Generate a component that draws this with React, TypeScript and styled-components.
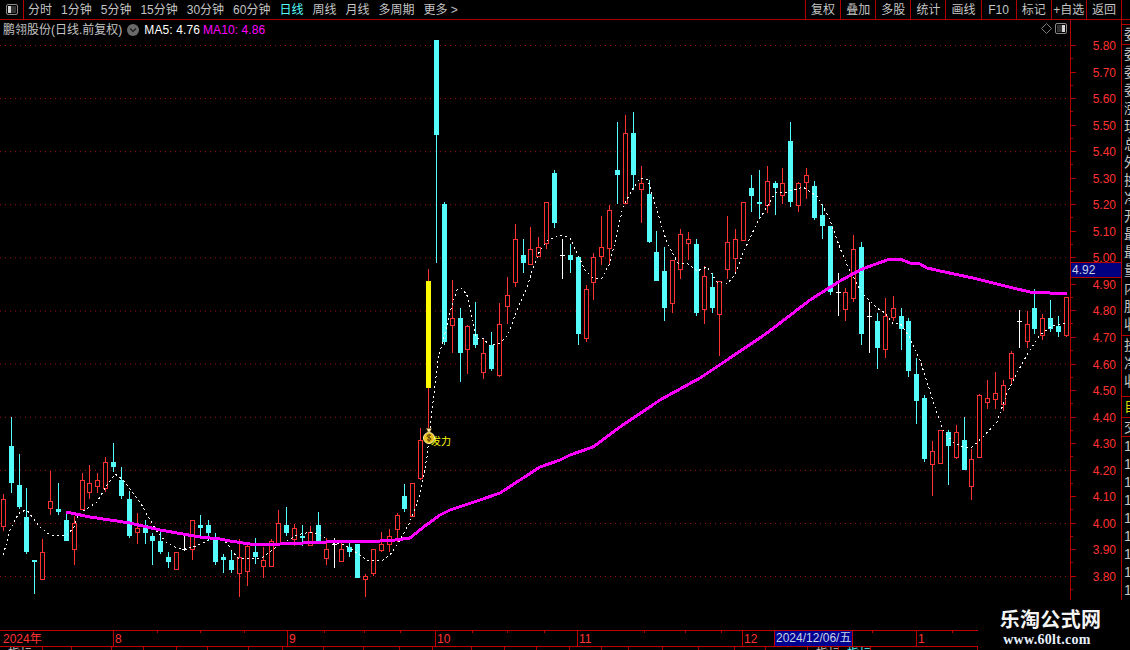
import React from "react";
import styled, { createGlobalStyle } from "styled-components";

const RED = "#ff3232";
const CYAN = "#54fcfc";
const LINE = "#b00000";
const FONT = `"Liberation Sans", "Noto Sans CJK SC", sans-serif`;

const Global = createGlobalStyle`
  html, body { margin: 0; padding: 0; background: #000; }
`;

const Page = styled.div`
  width: 1130px;
  height: 650px;
  background: #000;
  overflow: hidden;
  position: relative;
  display: flex;
  flex-direction: column;
  font-family: ${FONT};
  font-size: 12px;
  color: #c4c4c4;
`;

const Toolbar = styled.div`
  height: 19px;
  flex: none;
  display: flex;
  align-items: center;
  border-bottom: 1px solid ${LINE};
  line-height: 19px;
`;
const PanelToggle = styled.div`
  width: 23px;
  height: 19px;
  flex: none;
  display: flex;
  align-items: center;
  justify-content: center;
  border-right: 1px solid ${LINE};
  box-sizing: content-box;
`;
const PeriodList = styled.div`
  display: flex;
  gap: 9px;
  padding-left: 4px;
  padding-top: 1px;
  flex: 1;
`;
const Period = styled.span<{ $active?: boolean }>`
  white-space: pre;
  color: ${(p) => (p.$active ? "#54fcfc" : "#c4c4c4")};
`;
const ActionList = styled.div`
  display: flex;
  height: 19px;
`;
const ActionButton = styled.div`
  width: 35.11px;
  box-sizing: border-box;
  border-left: 1px solid ${LINE};
  text-align: center;
  white-space: nowrap;
  overflow: hidden;
  line-height: 20px;
`;
const ActionEnd = styled.div`
  width: 8px;
  border-left: 1px solid ${LINE};
`;

const Body = styled.div`
  flex: none;
  height: 610px;
  display: flex;
`;
const ChartPane = styled.div`
  position: relative;
  width: 1070px;
  flex: none;
`;
const ChartSvg = styled.svg`
  display: block;
  width: 1070px;
  height: 610px;
`;
const Legend = styled.div`
  position: absolute;
  left: 3px;
  top: 1px;
  height: 18px;
  display: flex;
  align-items: center;
  line-height: 18px;
  white-space: nowrap;
  color: #c4c4c4;
`;
const LegendValue = styled.span<{ $color: string; $left: number }>`
  color: ${(p) => p.$color};
  margin-left: ${(p) => p.$left}px;
  letter-spacing: 0.1px;
`;
const PaneTools = styled.div`
  position: absolute;
  right: 3px;
  top: 3px;
  display: flex;
  align-items: center;
  gap: 3px;
`;

const PriceAxis = styled.div`
  position: relative;
  width: 50px;
  flex: none;
  border-left: 1px solid ${LINE};
  padding-top: 12px;
  box-sizing: content-box;
`;
const PriceRow = styled.div`
  position: relative;
  height: 26.55px;
  line-height: 28px;
  padding-right: 5px;
  text-align: right;
  color: ${RED};
  font-size: 12px;
  &::before {
    content: "";
    position: absolute;
    left: 0;
    top: 13px;
    height: 1px;
    width: 5px;
    background: ${LINE};
  }
  &::after {
    content: "";
    position: absolute;
    left: 0;
    top: 26px;
    height: 1px;
    width: 2px;
    background: ${LINE};
  }
`;
const PriceTag = styled.div`
  position: absolute;
  left: 0;
  top: 242px;
  width: 50px;
  height: 16px;
  box-sizing: border-box;
  background: #000080;
  border-top: 1px solid ${LINE};
  border-bottom: 1px solid ${LINE};
  color: #c8d4e4;
  line-height: 15px;
  padding-left: 1px;
`;

const SideStrip = styled.div`
  flex: none;
  width: 8px;
  height: 580px;
  border-left: 1px solid ${LINE};
  overflow: hidden;
`;
const SideGroup = styled.div<{ $h: number; $color?: string; $open?: boolean }>`
  height: ${(p) => p.$h}px;
  box-sizing: border-box;
  border-bottom: ${(p) => (p.$open ? "none" : `1px solid ${LINE}`)};
  color: ${(p) => p.$color ?? "#c4c4c4"};
  overflow: hidden;
`;
const SideCell = styled.div`
  height: 18px;
  line-height: 18px;
  padding-left: 2px;
  font-size: 14px;
  white-space: nowrap;
`;

const TimeAxis = styled.div`
  position: relative;
  height: 17px;
  flex: none;
  width: 978px;
  box-sizing: border-box;
  border-top: 1px solid #c00000;
  border-bottom: 1px solid #c00000;
  display: flex;
`;
const TimeCell = styled.div<{ $w: number; $first?: boolean }>`
  width: ${(p) => p.$w}px;
  flex: none;
  box-sizing: border-box;
  border-left: ${(p) => (p.$first ? "none" : `1px solid #c00000`)};
  color: ${RED};
  padding-left: ${(p) => (p.$first ? 3 : 1)}px;
  line-height: 16px;
  white-space: nowrap;
`;
const DateCursor = styled.div`
  width: 79px;
  flex: none;
  box-sizing: border-box;
  border-left: 1px solid #c00000;
  border-right: 1px solid #c00000;
  background: #000090;
  color: #c8d4e4;
  line-height: 15px;
  padding-left: 1px;
  white-space: nowrap;
  overflow: hidden;
`;
const TimeTicks = styled.svg`
  position: absolute;
  left: 0;
  top: 0;
  width: 978px;
  height: 3px;
`;

const TabStrip = styled.div`
  width: 978px;
  height: 3px;
  flex: none;
  display: flex;
  overflow: hidden;
`;
const TabCell = styled.div<{ $w: number; $color?: string }>`
  width: ${(p) => p.$w}px;
  flex: none;
  box-sizing: border-box;
  border-right: 1px solid ${LINE};
  padding-left: 8px;
  color: ${(p) => p.$color ?? "transparent"};
  line-height: 14px;
  white-space: nowrap;
  overflow: hidden;
`;

const Watermark = styled.div`
  position: absolute;
  left: 978px;
  top: 600px;
  width: 152px;
  height: 50px;
  background: #000;
  display: flex;
  flex-direction: column;
  align-items: center;
  padding-top: 7px;
  box-sizing: border-box;
  color: #f4f4f4;
`;
const BrandName = styled.div`
  font-family: "Noto Sans CJK SC", sans-serif;
  font-weight: 700;
  font-size: 20px;
  line-height: 24px;
  margin-left: -7px;
  letter-spacing: 0.3px;
`;
const BrandUrl = styled.div`
  font-family: "Liberation Serif", serif;
  font-weight: 700;
  font-size: 14px;
  line-height: 15px;
  margin-left: -14px;
  margin-top: 1px;
  letter-spacing: 0.3px;
  color: #e8f0ff;
`;

type T = "r" | "c" | "w" | "y";
type Candle = [T, number, number, number, number];

const candles: Candle[] = [
  ["r",494,499,526,531],["c",417,446,483,493],["c",454,485,507,509],["c",488,517,552,554],
  ["c",560,560,562,594],["r",539,552,579,579],["r",471,501,508,515],["c",483,509,512,515],
  ["c",511,520,541,541],["r",516,523,549,565],["r",473,480,509,510],["r",465,483,492,499],
  ["r",473,480,486,493],["r",457,462,488,492],["c",443,462,467,472],["c",467,480,496,499],
  ["c",491,499,536,538],["r",513,528,532,544],["c",520,525,533,544],["c",533,536,541,565],
  ["c",531,541,552,554],["c",552,557,562,568],["r",552,552,569,569],["w",536,549,549,551],
  ["r",520,520,549,560],["c",515,525,528,536],["c",520,525,533,541],["c",533,539,562,565],
  ["c",554,557,560,573],["c",551,560,570,573],["r",539,557,573,597],["r",545,546,571,586],
  ["c",538,552,557,564],["r",547,560,566,578],["r",539,541,566,566],["r",510,523,543,545],
  ["c",507,525,533,536],["r",524,528,539,546],["c",525,536,538,546],["r",526,532,545,545],
  ["c",512,525,544,544],["r",538,549,558,565],["w",538,544,544,568],["r",540,549,561,561],
  ["c",542,547,552,557],["c",544,544,578,578],["r",574,576,579,597],["r",549,549,573,576],
  ["r",532,544,550,552],["r",529,536,544,552],["r",513,515,529,542],["c",484,496,509,512],
  ["r",483,483,516,516],["r",428,440,478,480],["y",269,281,388,428],["c",40,40,135,263],
  ["c",202,204,342,345],["r",280,318,325,353],["c",308,318,353,382],["r",325,326,349,374],
  ["c",302,334,345,348],["r",338,353,372,379],["c",332,345,369,371],["r",303,324,375,377],
  ["r",277,295,306,324],["r",224,239,282,287],["c",239,255,263,273],["r",227,249,264,265],
  ["r",237,247,256,256],["r",202,202,243,249],["c",170,173,223,228],["w",239,255,255,279],
  ["c",244,255,260,273],["c",257,257,334,345],["r",285,289,338,342],["r",253,257,282,300],
  ["r",216,247,256,265],["r",205,210,248,265],["c",122,170,175,204],["r",115,133,203,203],
  ["c",112,133,175,190],["r",166,183,189,223],["c",180,194,242,243],["c",231,252,281,281],
  ["c",247,271,308,321],["r",260,260,303,313],["r",229,234,269,279],["r",232,239,243,260],
  ["c",239,244,313,316],["r",266,276,309,324],["c",273,287,308,313],["r",281,281,314,356],
  ["r",216,242,269,279],["r",229,239,258,273],["r",202,202,240,240],["c",175,188,196,212],
  ["c",170,202,204,218],["r",166,181,205,213],["c",181,183,188,215],["r",168,183,195,204],
  ["c",122,141,202,207],["r",182,183,205,212],["r",168,175,182,199],["c",181,186,218,220],
  ["c",204,215,226,239],["c",226,226,292,295],["w",273,292,292,316],["r",288,292,309,321],
  ["r",235,249,298,302],["c",242,247,334,345],["w",302,316,316,353],["c",313,321,348,369],
  ["r",298,316,349,358],["r",296,308,317,321],["c",308,316,329,350],["c",318,321,371,377],
  ["c",358,374,401,424],["c",395,398,459,462],["r",441,451,464,496],["r",430,430,463,463],
  ["c",430,432,446,485],["r",425,432,457,459],["c",417,440,470,470],["r",449,459,486,500],
  ["r",394,395,457,457],["r",380,398,402,409],["r",372,393,399,409],["r",380,385,404,411],
  ["r",351,353,378,385],["w",310,321,321,348],["r",311,324,341,348],["c",289,308,329,334],
  ["r",314,318,335,340],["c",300,318,329,332],["c",316,326,332,337],["r",297,297,335,337],
];

const dashed =
  "3,555 7,542 10,530 16,518 20,512 27,510 33,518 40,527 50,535 57,536 67,535 74,527 78,515 85,510 97,502 107,485 115,474 123,480 131,490 140,502 150,520 158,533 167,543 177,548 184,549 193,547 203,543 213,537 220,540 227,543 232,551 238,558 248,559 262,558 272,550 283,543 297,535 310,532 320,535 333,543 345,545 357,553 367,560 382,561 390,555 400,540 410,522 420,495 427,457 432,410 438,360 445,333 452,305 457,290 462,288 468,297 472,320 476,338 483,338 490,346 500,343 508,335 517,310 527,287 533,268 540,250 548,240 562,235 570,238 577,253 585,270 593,278 602,278 610,263 617,233 623,207 632,190 640,178 648,180 653,197 660,220 667,243 678,263 688,264 697,271 707,267 717,282 727,284 735,275 743,253 757,223 767,207 775,193 787,192 803,187 818,197 830,220 840,248 847,265 862,293 877,308 885,313 893,324 900,323 910,338 920,360 927,382 935,407 943,430 953,442 963,447 972,447 983,437 997,422 1007,393 1017,373 1028,353 1040,335 1052,326 1065,323";

const maLine =
  "66,512 90,517 130,523 160,530 200,537 220,539 230,541 250,544 280,544 350,541 365,542 395,540 410,538 425,526 440,515 450,510 480,500 500,493 540,467 560,460 570,455 593,447 620,427 660,400 700,378 727,360 767,333 810,300 840,281 860,270 873,265 890,259 900,259 910,263 920,264 927,268 940,271 973,278 997,284 1013,288 1030,292 1050,293 1067,294";

const color = { r: RED, c: CYAN, w: "#ffffff", y: "#ffff00" };
const prices = Array.from({ length: 21 }, (_, i) => (5.8 - i * 0.1).toFixed(2));
const grid = Array.from({ length: 11 }, (_, i) => 45.5 + i * 53.1);
const periods = ["分时", "1分钟", "5分钟", "15分钟", "30分钟", "60分钟", "日线", "周线", "月线", "多周期", "更多 >"];
const actions = ["复权", "叠加", "多股", "统计", "画线", "F10", "标记", "+自选", "返回"];
const tickX = [157, 200, 244, 324, 364, 400, 472, 507, 544, 644, 685, 721, 872, 952];
const tabEdges = [43, 72, 112, 144, 177, 208, 249, 283, 324, 364, 400, 433, 472, 505, 537, 570, 602, 629, 663, 699, 735, 766, 808, 839, 871, 978];
const tabs = tabEdges.map((x, i) => x - (i ? tabEdges[i - 1] : 0));

const CandleMark: React.FC<{ c: Candle; i: number }> = ({ c, i }) => {
  const [t, wt, bt, bb, wb] = c;
  const x = Math.floor(3.3 + 7.875 * i);
  const col = color[t];
  const wickCol = t === "y" ? RED : col;
  const h = Math.max(bb - bt, 1);
  return (
    <g>
      {bt > wt && <rect x={x} y={wt} width={1} height={bt - wt} fill={wickCol} />}
      {wb > bb && <rect x={x} y={bb} width={1} height={wb - bb} fill={wickCol} />}
      {t === "r" ? (
        <rect x={x - 1.5} y={bt + 0.5} width={4} height={h} fill="#000" stroke={RED} strokeWidth={1} />
      ) : (
        <rect x={x - 2} y={bt} width={5} height={h} fill={col} />
      )}
    </g>
  );
};

const ToggleIcon: React.FC<{ side: "l" | "r" }> = ({ side }) => (
  <svg width="12" height="11" viewBox="0 0 12 11">
    <rect x="0.5" y="0.5" width="11" height="10" rx="1.5" fill="#000" stroke="#8a8a8a" />
    <rect x={side === "l" ? 2 : 7} y="2" width="3" height="7" fill="#d4d4d4" />
    <rect x={side === "l" ? 5 : 2} y="2" width="5" height="7" fill="#333" />
  </svg>
);

const tabColor = (i: number) => (i === 0 ? "#c4c4c4" : i === 24 ? CYAN : i === 23 ? "#c4c4c4" : undefined);

export default function App() {
  return (
    <Page>
      <Global />
      <Toolbar>
        <PanelToggle>
          <ToggleIcon side="l" />
        </PanelToggle>
        <PeriodList>
          {periods.map((p) => (
            <Period key={p} $active={p === "日线"}>{p}</Period>
          ))}
        </PeriodList>
        <ActionList>
          {actions.map((a) => (
            <ActionButton key={a}>{a}</ActionButton>
          ))}
          <ActionEnd />
        </ActionList>
      </Toolbar>
      <Body>
        <ChartPane>
          <ChartSvg viewBox="0 20 1070 610">
            {grid.map((y) => (
              <line key={y} x1={0} x2={1068} y1={y} y2={y} stroke="#a01010" strokeWidth={1} strokeDasharray="1 4" />
            ))}
            {candles.map((c, i) => (
              <CandleMark key={i} c={c} i={i} />
            ))}
            <polyline points={dashed} fill="none" stroke="#fff" strokeWidth={1} strokeDasharray="2 3" shapeRendering="crispEdges" />
            <polyline points={maLine} fill="none" stroke="#ff00ff" strokeWidth={3} shapeRendering="crispEdges" />
            <text x={431} y={445} fill="#ffff00" fontSize={10} fontFamily={`"Noto Sans CJK SC", sans-serif`}>发力</text>
            <circle cx={429} cy={438} r={5.5} fill="#e8c020" stroke="#fff2a0" strokeWidth={1} />
            <path d="M426.5 428.5h5l-1.5 3.5h-2z" fill="#f4e8b0" stroke="#a07010" strokeWidth={0.5} />
            <path d="M431 435.5c-1-1-4-1-4 .7s4 1 4 2.8-3 1.6-4 .5M429 434v8" fill="none" stroke="#5a3a00" strokeWidth={1} />
          </ChartSvg>
          <Legend>
            鹏翎股份(日线.前复权)
            <svg width="12" height="12" viewBox="0 0 12 12" style={{ marginLeft: 5 }}>
              <circle cx="6" cy="6" r="6" fill="#6a6a6a" />
              <path d="M3 4.5 6 7.5 9 4.5" fill="none" stroke="#1a1a1a" strokeWidth="1.2" />
            </svg>
            <LegendValue $color="#ffffff" $left={5}>MA5: 4.76</LegendValue>
            <LegendValue $color="#ff00ff" $left={3}>MA10: 4.86</LegendValue>
          </Legend>
          <PaneTools>
            <svg width="11" height="11" viewBox="0 0 11 11">
              <path d="M5.5 0.5 10.5 5.5 5.5 10.5 0.5 5.5Z" fill="none" stroke="#7a7a7a" />
            </svg>
            <ToggleIcon side="r" />
          </PaneTools>
        </ChartPane>
        <PriceAxis>
          {prices.map((p) => (
            <PriceRow key={p}>{p}</PriceRow>
          ))}
          <PriceTag>4.92</PriceTag>
        </PriceAxis>
        <SideStrip>
          <SideGroup $h={5} />
          <SideGroup $h={20}><SideCell>委</SideCell></SideGroup>
          <SideGroup $h={291}>
            {"委委委涨现总外换净开最最量内股收".split("").map((ch, i) => (
              <SideCell key={i}>{ch}</SideCell>
            ))}
          </SideGroup>
          <SideGroup $h={61}>
            {"投净收".split("").map((ch, i) => (
              <SideCell key={i}>{ch}</SideCell>
            ))}
          </SideGroup>
          <SideGroup $h={21} $color="#d8d800"><SideCell>自</SideCell></SideGroup>
          <SideGroup $h={19}><SideCell>交</SideCell></SideGroup>
          <SideGroup $h={163} $open>
            {Array.from({ length: 9 }, (_, i) => (
              <SideCell key={i}>1</SideCell>
            ))}
          </SideGroup>
        </SideStrip>
      </Body>
      <TimeAxis>
        <TimeTicks viewBox="0 0 978 3">
          {tickX.map((x) => (
            <rect key={x} x={x} y={0} width={1} height={2} fill="#c00000" />
          ))}
        </TimeTicks>
        <TimeCell $w={113} $first>2024年</TimeCell>
        <TimeCell $w={174}>8</TimeCell>
        <TimeCell $w={148}>9</TimeCell>
        <TimeCell $w={142}>10</TimeCell>
        <TimeCell $w={165}>11</TimeCell>
        <TimeCell $w={32}>12</TimeCell>
        <DateCursor>2024/12/06/五</DateCursor>
        <TimeCell $w={63} $first />
        <TimeCell $w={62}>1</TimeCell>
      </TimeAxis>
      <TabStrip>
        {tabs.map((w, i) => (
          <TabCell key={i} $w={w} $color={tabColor(i)}>指标</TabCell>
        ))}
      </TabStrip>
      <Watermark>
        <BrandName>乐淘公式网</BrandName>
        <BrandUrl>www.60lt.com</BrandUrl>
      </Watermark>
    </Page>
  );
}
